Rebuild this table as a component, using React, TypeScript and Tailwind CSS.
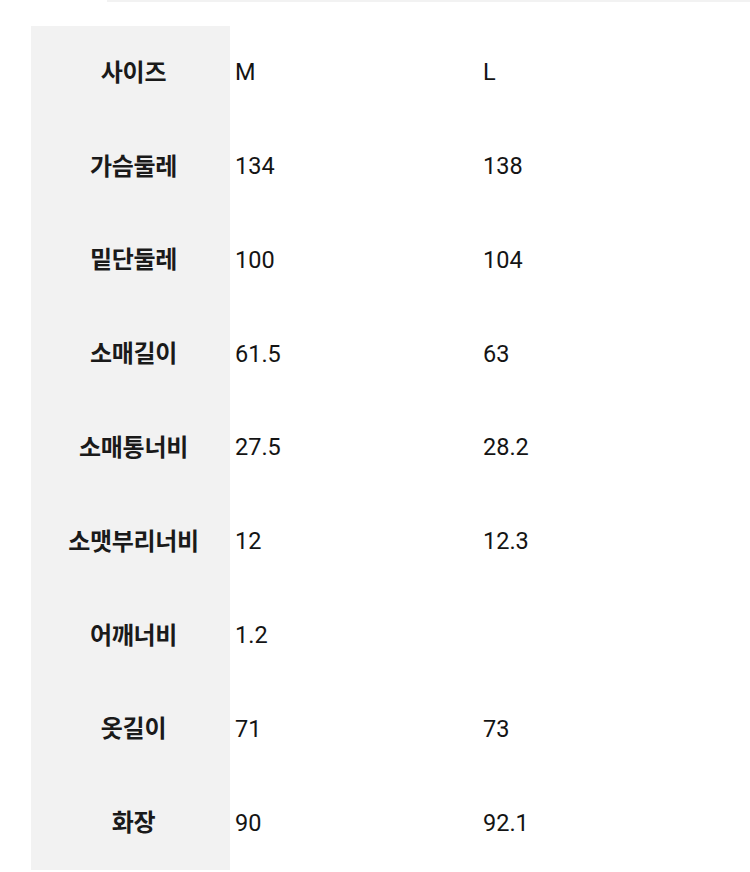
const rows: [string, string, string][] = [
  ["사이즈", "M", "L"],
  ["가슴둘레", "134", "138"],
  ["밑단둘레", "100", "104"],
  ["소매길이", "61.5", "63"],
  ["소매통너비", "27.5", "28.2"],
  ["소맷부리너비", "12", "12.3"],
  ["어깨너비", "1.2", ""],
  ["옷길이", "71", "73"],
  ["화장", "90", "92.1"],
];

export default function App() {
  return (
    <div
      className="w-[750px] h-[872px] bg-white text-[#141414] overflow-hidden"
      style={{ fontFamily: 'Roboto, "Noto Sans CJK KR", sans-serif' }}
    >
      <div className="ml-[107px] h-[2px] bg-[#f2f2f2]" />
      <div className="mt-[24px] ml-[31px]">
        {rows.map(([label, m, l]) => (
          <div key={label} className="flex h-[93.8px]">
            <div className="w-[199px] pl-[6px] bg-[#f2f2f2] flex items-center justify-center text-[24px] font-bold tracking-[-0.3px] text-[#1a1a1a]">
              {label}
            </div>
            <div className="w-[253px] pl-[5px] flex items-center text-[23.5px]">{m}</div>
            <div className="flex items-center text-[23.5px]">{l}</div>
          </div>
        ))}
      </div>
    </div>
  );
}
